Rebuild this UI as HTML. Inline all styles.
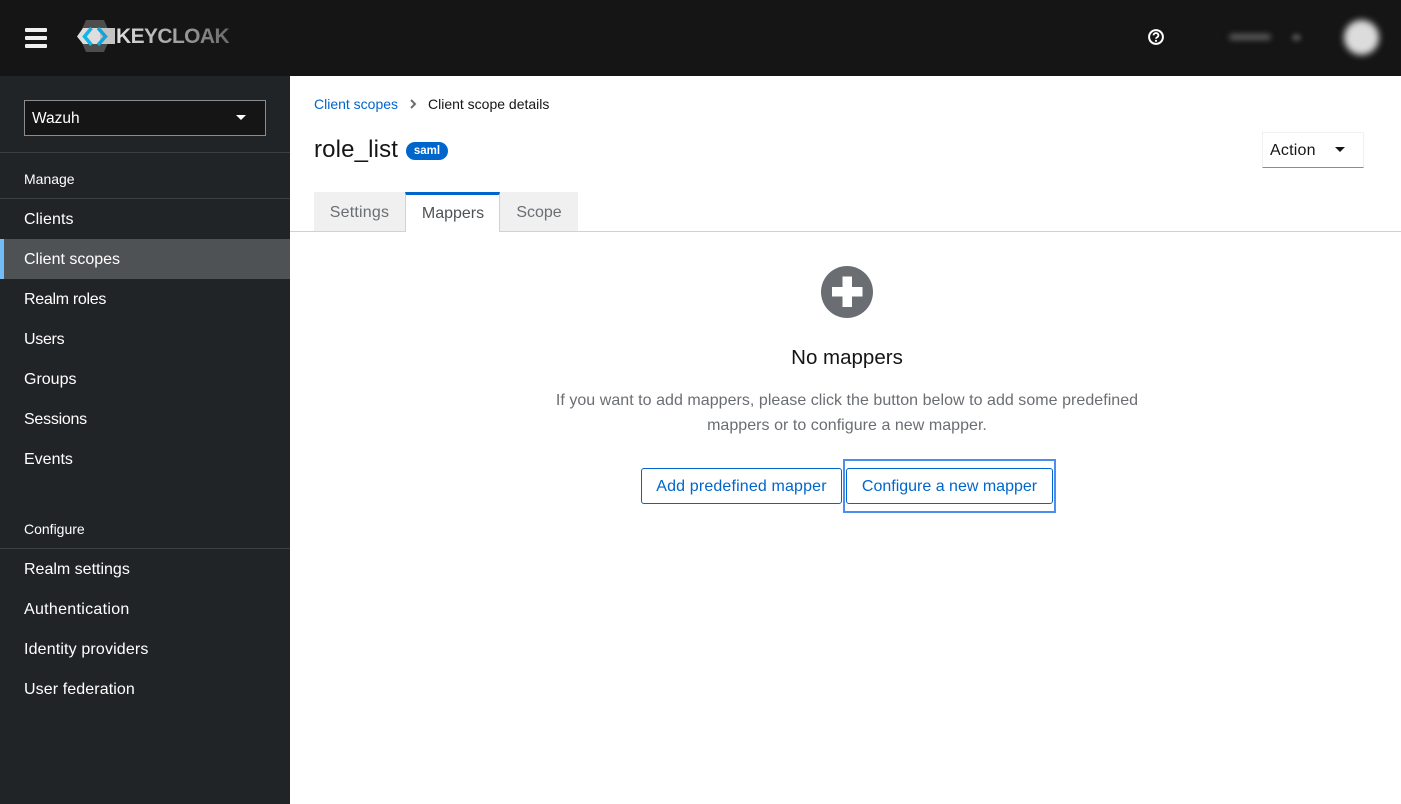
<!DOCTYPE html>
<html lang="en"><head><meta charset="utf-8"><title>Keycloak</title>
<style>
*{box-sizing:border-box}
html,body{margin:0;padding:0;width:1401px;height:804px;overflow:hidden;background:#fff;font-family:"Liberation Sans",sans-serif;color:#151515}
.a{position:absolute;white-space:nowrap}
#top{left:0;top:0;width:1401px;height:76px;background:#151515}
#side{left:0;top:76px;width:290px;height:728px;background:#212427}
.nav{left:24px;color:#fff;font-size:16px;line-height:20px;margin-top:1px}
.line{left:0;width:290px;height:1px;background:#3c3f42}
.head{left:24px;color:#fff;font-size:14px;line-height:18px;margin-top:-1px}
.tab{top:192px;height:39px;background:#f0f0f0;color:#6a6e73;font-size:16px;line-height:41px;text-align:center}
.btn{top:468px;height:36px;border:1px solid #06c;border-radius:3px;color:#06c;font-size:16px;line-height:35px;text-align:center;background:#fff}
</style></head><body>
<div class="a" id="top"></div>
<div class="a" style="left:25px;top:28px;width:22px;height:4px;background:#f0f0f0;border-radius:1px"></div>
<div class="a" style="left:25px;top:36px;width:22px;height:4px;background:#f0f0f0;border-radius:1px"></div>
<div class="a" style="left:25px;top:44px;width:22px;height:4px;background:#f0f0f0;border-radius:1px"></div>
<svg class="a" style="left:76px;top:19px" width="40" height="34" viewBox="0 0 40 34">
<polygon points="10,1 28,1 35,17 28,33 10,33 3,17" fill="#4d4d4d"/>
<polygon points="1,17.500 7,9 39,9 39,25 7,25" fill="#dedede"/>
<polygon points="24,9 39,9 39,25 24,25" fill="#c4c4c4"/>
<path d="M15.500 9 L8.500 17.500 L15.500 26" fill="none" stroke="#12b5e6" stroke-width="3.500"/>
<path d="M22 9 L29.500 17.500 L22 26" fill="none" stroke="#12a4d8" stroke-width="3.500"/>
</svg>
<div class="a" style="left:116px;top:24px;font-size:21px;line-height:26px;font-weight:700;letter-spacing:-.6px;background:linear-gradient(90deg,#e0e0e0,#6a6a6a);-webkit-background-clip:text;background-clip:text;color:transparent">KEYCLOAK</div>
<svg class="a" style="left:1148px;top:29px" width="16" height="16" viewBox="0 0 16 16">
<circle cx="8" cy="8" r="6.900" fill="none" stroke="#fff" stroke-width="2"/>
<path d="M5.600 6.300a2.400 2.200 0 1 1 3.700 1.800c-.8.5-1.300.9-1.300 1.600" fill="none" stroke="#fff" stroke-width="1.800"/>
<circle cx="8" cy="11.800" r="1.100" fill="#fff"/>
</svg>
<div class="a" style="left:1229px;top:34px;width:42px;height:6px;background:#5c5c5c;border-radius:4px;filter:blur(3px)"></div>
<div class="a" style="left:1292px;top:34px;width:9px;height:7px;background:#505050;border-radius:4px;filter:blur(2.500px)"></div>
<div class="a" style="left:1344px;top:20px;width:35px;height:35px;background:#dcdcdc;border-radius:50%;filter:blur(3.500px)"></div>

<div class="a" id="side"></div>
<div class="a" style="left:24px;top:100px;width:242px;height:36px;background:#151515;border:1px solid #8a8d90"></div>
<div class="a" style="left:32px;top:109px;color:#fff;font-size:15.500px;line-height:20px">Wazuh</div>
<div class="a" style="left:236px;top:115px;width:0;height:0;border-left:5.500px solid transparent;border-right:5.500px solid transparent;border-top:5.500px solid #fff"></div>
<div class="a line" style="top:152px"></div>
<div class="a head" style="top:171px">Manage</div>
<div class="a line" style="top:198px"></div>
<div class="a nav" style="top:209px;letter-spacing:.1px">Clients</div>
<div class="a" style="left:0;top:239px;width:290px;height:40px;background:#4f5255"></div>
<div class="a" style="left:0;top:239px;width:4px;height:40px;background:#73bcf7"></div>
<div class="a nav" style="top:249px">Client scopes</div>
<div class="a nav" style="top:289px;letter-spacing:-.3px">Realm roles</div>
<div class="a nav" style="top:329px;letter-spacing:-.3px">Users</div>
<div class="a nav" style="top:369px">Groups</div>
<div class="a nav" style="top:409px;letter-spacing:-.25px">Sessions</div>
<div class="a nav" style="top:449px">Events</div>
<div class="a head" style="top:521px">Configure</div>
<div class="a line" style="top:548px"></div>
<div class="a nav" style="top:559px">Realm settings</div>
<div class="a nav" style="top:599px;letter-spacing:.3px">Authentication</div>
<div class="a nav" style="top:639px;letter-spacing:.15px">Identity providers</div>
<div class="a nav" style="top:679px;letter-spacing:.1px">User federation</div>

<div class="a" style="left:314px;top:95px;color:#06c;font-size:14px;line-height:18px">Client scopes</div>
<svg class="a" style="left:408px;top:99px" width="10" height="10" viewBox="0 0 10 10"><path d="M3 1l4 4-4 4" fill="none" stroke="#6a6e73" stroke-width="2"/></svg>
<div class="a" style="left:428px;top:95px;font-size:14px;line-height:18px">Client scope details</div>
<div class="a" style="left:314px;top:135px;font-size:24px;line-height:30px;letter-spacing:.15px">role_list</div>
<div class="a" style="left:406px;top:142px;width:42px;height:18px;background:#06c;border-radius:9px;color:#fff;font-size:11.500px;font-weight:700;line-height:18px;text-align:center">saml</div>
<div class="a" style="left:1262px;top:132px;width:102px;height:36px;background:#fff;border:1px solid #f0f0f0;border-bottom:1px solid #8a8d90"></div>
<div class="a" style="left:1270px;top:141px;font-size:16px;line-height:20px;color:#151515;letter-spacing:.2px">Action</div>
<div class="a" style="left:1334.500px;top:147px;width:0;height:0;border-left:5.500px solid transparent;border-right:5.500px solid transparent;border-top:5.500px solid #151515"></div>

<div class="a" style="left:290px;top:231px;width:1111px;height:1px;background:#d2d2d2"></div>
<div class="a tab" style="left:314px;width:91px;letter-spacing:.2px">Settings</div>
<div class="a tab" style="left:405px;width:95px;height:40px;background:#fff;color:#4f5255;border-left:1px solid #d2d2d2;border-right:1px solid #d2d2d2;border-top:3px solid #06c;line-height:37px;padding-left:1px">Mappers</div>
<div class="a tab" style="left:500px;width:78px">Scope</div>

<svg class="a" style="left:821px;top:266px" width="52" height="52" viewBox="0 0 52 52">
<circle cx="26" cy="26" r="26" fill="#6a6e73"/>
<path d="M21.500 10.500h9.500v10.500h10.500v9.500H31v10.500h-9.500V30.500H11V21h10.500z" fill="#fff"/>
</svg>
<div class="a" style="left:547px;top:346px;width:600px;text-align:center;font-size:20.500px;line-height:24px">No mappers</div>
<div class="a" style="left:547px;top:388px;width:600px;text-align:center;font-size:16px;line-height:25px;color:#6a6e73;letter-spacing:.04px">If you want to add mappers, please click the button below to add some predefined<br>mappers or to configure a new mapper.</div>
<div class="a btn" style="left:641px;width:201px;letter-spacing:.15px">Add predefined mapper</div>
<div class="a btn" style="left:846px;width:207px">Configure a new mapper</div>
<div class="a" style="left:843px;top:459px;width:213px;height:54px;border:2px solid #4b8df0"></div>
</body></html>
